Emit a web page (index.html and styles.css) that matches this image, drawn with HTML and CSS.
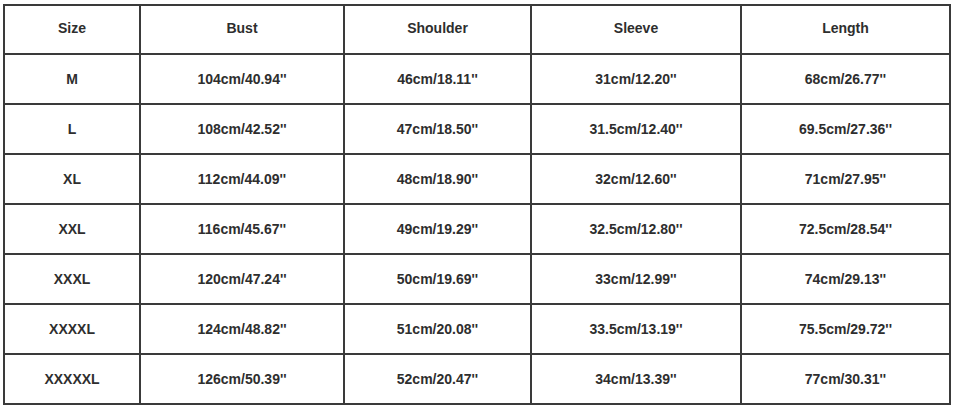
FILE: index.html
```html
<!DOCTYPE html>
<html>
<head>
<meta charset="utf-8">
<link rel="stylesheet" href="styles.css">
</head>
<body>
<div class="size-chart">
  <div class="cell head">Size</div><div class="cell head">Bust</div><div class="cell head">Shoulder</div><div class="cell head">Sleeve</div><div class="cell head">Length</div>
  <div class="cell">M</div><div class="cell">104cm/40.94''</div><div class="cell">46cm/18.11''</div><div class="cell">31cm/12.20''</div><div class="cell">68cm/26.77''</div>
  <div class="cell">L</div><div class="cell">108cm/42.52''</div><div class="cell">47cm/18.50''</div><div class="cell">31.5cm/12.40''</div><div class="cell">69.5cm/27.36''</div>
  <div class="cell">XL</div><div class="cell">112cm/44.09''</div><div class="cell">48cm/18.90''</div><div class="cell">32cm/12.60''</div><div class="cell">71cm/27.95''</div>
  <div class="cell">XXL</div><div class="cell">116cm/45.67''</div><div class="cell">49cm/19.29''</div><div class="cell">32.5cm/12.80''</div><div class="cell">72.5cm/28.54''</div>
  <div class="cell">XXXL</div><div class="cell">120cm/47.24''</div><div class="cell">50cm/19.69''</div><div class="cell">33cm/12.99''</div><div class="cell">74cm/29.13''</div>
  <div class="cell">XXXXL</div><div class="cell">124cm/48.82''</div><div class="cell">51cm/20.08''</div><div class="cell">33.5cm/13.19''</div><div class="cell">75.5cm/29.72''</div>
  <div class="cell">XXXXXL</div><div class="cell">126cm/50.39''</div><div class="cell">52cm/20.47''</div><div class="cell">34cm/13.39''</div><div class="cell">77cm/30.31''</div>
</div>
</body>
</html>
```
FILE: styles.css
```css
html, body {
  margin: 0;
  padding: 0;
  background: #ffffff;
}
body {
  padding: 4px 0 0 3px;
  font-family: "Liberation Sans", Arial, sans-serif;
}
.size-chart {
  display: grid;
  width: max-content;
  grid-template-columns: 134px 202px 185px 208px 207px;
  grid-template-rows: 47px repeat(7, 48px);
  gap: 2px;
  padding: 2px;
  background: #3a3a3a;
}
.cell {
  background: #ffffff;
  display: flex;
  align-items: center;
  justify-content: center;
  font-size: 14px;
  font-weight: bold;
  color: #2e2e2e;
}
.head {
  padding-bottom: 3px;
}
```
